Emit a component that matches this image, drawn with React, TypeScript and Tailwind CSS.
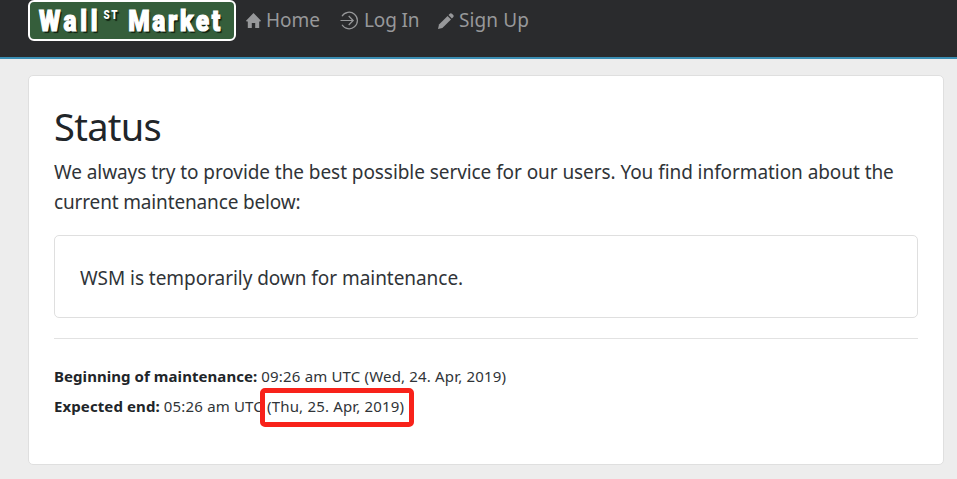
function HomeIcon() {
  return (
    <svg className="h-[15px] w-[15px]" viewBox="0 0 15 15" fill="currentColor">
      <path d="M7.5 0 15 7.8 14 8.8 13.2 8.2V15H9.2V10H5.8V15H1.8V8.2L1 8.8 0 7.8Z" />
    </svg>
  );
}

function LogInIcon() {
  return (
    <svg className="h-[19px] w-[19px]" viewBox="0 0 19 19" fill="none" stroke="currentColor" strokeWidth="1.2">
      <path d="M2 5.2a8.3 8.3 0 1 1 0 8.6" />
      <path d="M.5 9.5H13M8.7 5 13.2 9.5 8.7 14" />
    </svg>
  );
}

function PencilIcon() {
  return (
    <svg className="h-[16px] w-[16px]" viewBox="0 0 16 16" fill="currentColor">
      <path d="M0 16 1 11.5 9.6 3 13 6.4 4.4 15Z" />
      <path d="M10.5 2.1 12.1.6Q13 0 13.9.7L15.3 2.1Q16 3 15.4 3.9L13.9 5.5Z" />
    </svg>
  );
}

export default function App() {
  return (
    <div className="h-[479px] w-[957px] overflow-hidden bg-[#ededed] font-['Noto_Sans','Open_Sans',sans-serif] text-[#212529]">
      <header className="flex h-[59px] items-start border-b-2 border-[#3b8fb4] bg-[#2a2b2d] pl-7">
        <div className="flex h-[41px] w-[208px] items-center overflow-hidden rounded-[6px] border-2 border-white bg-[#355e3b] pl-[9px] text-white [text-shadow:2px_2px_1px_#10200f]">
          <div className="flex origin-left scale-x-[0.82] items-start font-['Roboto',sans-serif] text-[30px] leading-[37px] font-black whitespace-pre [-webkit-text-stroke:1.2px_white]">
            <span className="tracking-[4.4px]">Wall</span>
            <span className="ml-[3px] text-[12px] leading-[26px] tracking-[2px] [-webkit-text-stroke:0]">ST</span>
            <span className="ml-[11px] tracking-[3.2px]">Market</span>
          </div>
        </div>
        <nav className="flex h-[41px] items-center text-[19px] whitespace-nowrap text-[#97989a]">
          <a className="ml-[10px] flex w-[94px] items-center gap-[5px]"><HomeIcon /><span>Home</span></a>
          <a className="flex w-[98px] items-center gap-[5px]"><LogInIcon /><span className="tracking-[-0.15px]">Log In</span></a>
          <a className="flex items-center gap-[5px]"><PencilIcon /><span className="tracking-[0.1px]">Sign Up</span></a>
        </nav>
      </header>
      <main className="mt-[16px] ml-7 h-[390px] w-[916px] rounded-[5px] border border-[#dfdfdf] bg-white px-[25px] pt-[25px]">
        <h1 className="h-[56px] text-[38px] leading-[50px] tracking-[-0.7px]">Status</h1>
        <p className="text-[19px] leading-[30px] tracking-[-0.07px] whitespace-nowrap text-[#303438]">
          We always try to provide the best possible service for our users. You find information about the
          <br />
          <span className="tracking-[-0.15px]">current maintenance below:</span>
        </p>
        <div className="mt-[18px] flex h-[83px] items-center rounded-[5px] border border-[#dfdfdf] pt-[3px] pl-[25px] text-[19px] tracking-[-0.05px] text-[#303438]">
          WSM is temporarily down for maintenance.
        </div>
        <hr className="mt-[20px] border-[#e2e2e2]" />
        <div className="mt-[22px] text-[15px] leading-[30px] tracking-[0.17px] whitespace-nowrap text-[#303438]">
          <p><b className="tracking-[0.06px] text-[#212529]">Beginning of maintenance:</b> 09:26 am UTC (Wed, 24. Apr, 2019)</p>
          <p>
            <b className="tracking-[0.1px] text-[#212529]">Expected end:</b> 05:26 am UTC{" "}
            <span className="relative">
              (Thu, 25. Apr, 2019)
              <span className="absolute -top-[8px] -left-[7px] h-[39px] w-[154px] rounded-[5px] border-[5px] border-[#f8221a]" />
            </span>
          </p>
        </div>
      </main>
    </div>
  );
}
